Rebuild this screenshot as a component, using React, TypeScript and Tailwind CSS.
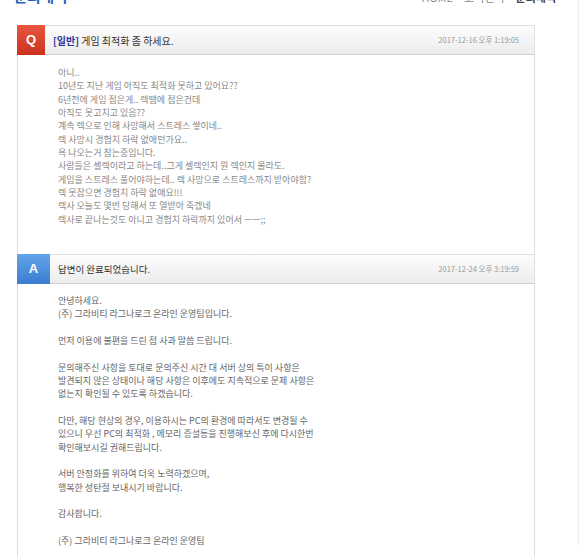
const question = [
  "아니..",
  "10년도 지난 게임 아직도 최적화 못하고 있어요??",
  "6년전에 게임 접은게.. 렉땜에 접은건데",
  "아직도 못고치고 있음??",
  "계속 렉으로 인해 사망해서 스트레스 쌓이네..",
  "렉 사망시 경험치 하락 없애던가요..",
  "욕 나오는거 참는중입니다.",
  "사람들은 셀렉이라고 하는데..그게 셀렉인지 뭔 렉인지 몰라도.",
  "게임을 스트레스 풀어야하는데.. 렉 사망으로 스트레스까지 받아야함?",
  "렉 못잡으면 경험치 하락 없애요!!!",
  "렉사 오늘도 몇번 당해서 또 열받아 죽겠네",
  "렉사로 끝나는것도 아니고 경험치 하락까지 있어서 ㅡㅡ;;",
];

const answer = [
  "안녕하세요.",
  "(주) 그라비티 라그나로크 온라인 운영팀입니다.",
  "",
  "먼저 이용에 불편을 드린 점 사과 말씀 드립니다.",
  "",
  "문의해주신 사항을 토대로 문의주신 시간 대 서버 상의 특이 사항은",
  "발견되지 않은 상태이나 해당 사항은 이후에도 지속적으로 문제 사항은",
  "없는지 확인될 수 있도록 하겠습니다.",
  "",
  "다만, 해당 현상의 경우, 이용하시는 PC의 환경에 따라서도 변경될 수",
  "있으니 우선 PC의 최적화 , 메모리 증설등을 진행해보신 후에 다시한번",
  "확인해보시길 권해드립니다.",
  "",
  "서버 안정화를 위하여 더욱 노력하겠으며,",
  "행복한 성탄절 보내시기 바랍니다.",
  "",
  "감사합니다.",
  "",
  "(주) 그라비티 라그나로크 온라인 운영팀",
];

function Lines({ lines, className }: { lines: string[]; className: string }) {
  return (
    <div className={className}>
      {lines.map((line, i) => (
        <p key={i} className="h-[13.33px] whitespace-pre leading-[13.33px]">
          {line}
        </p>
      ))}
    </div>
  );
}

export default function App() {
  return (
    <div className="h-[557px] w-[580px] overflow-hidden bg-white font-['Noto_Sans_CJK_KR',sans-serif]">
      <div className="h-full w-[579px] border-r border-[#ececec]">
        <div className="-mt-[12px] flex h-[16px] items-end justify-between pl-[14px] pr-[22px]">
          <h2 className="text-[14.5px] font-bold leading-[16px] text-[#2062c4]">문의내역</h2>
          <div className="text-[11px] leading-[13px] text-[#888]">
            HOME &gt; 고객센터 &gt; <span className="font-bold text-[#444]">문의내역</span>
          </div>
        </div>

        <div className="ml-[17px] mt-[21px] w-[518px]">
          {/* question */}
          <div className="flex h-[30px] items-center border border-l-0 border-[#e0e0e0] border-b-[#d0d0d0] bg-linear-to-b from-[#fcfcfc] to-[#ededed]">
            <div className="-my-px flex h-[30px] w-[28px] items-center justify-center bg-linear-to-b from-[#ea553f] to-[#c9321e] font-['Liberation_Sans',sans-serif] text-[13px] font-bold text-white">
              Q
            </div>
            <div className="ml-[8px] text-[10px] text-[#333]">
              <span className="font-bold text-[#26359c]">[일반]</span> 게임 최적화 좀 하세요.
            </div>
            <div className="ml-auto mr-[15px] text-[7.5px] text-[#999]">2017-12-16 오후 1:19:05</div>
          </div>
          <Lines
            lines={question}
            className="border-x border-[#dedede] pb-[28px] pl-[40px] pt-[11px] text-[9px] text-[#888]"
          />

          {/* answer */}
          <div className="flex h-[30px] items-center border border-l-0 border-[#e0e0e0] border-b-[#d0d0d0] bg-linear-to-b from-[#fcfcfc] to-[#ededed]">
            <div className="-my-px flex h-[30px] w-[33px] items-center justify-center bg-linear-to-b from-[#62a5ea] to-[#3a7dd0] font-['Liberation_Sans',sans-serif] text-[13px] font-bold text-white">
              A
            </div>
            <div className="ml-[8px] text-[9.5px] text-[#333]">답변이 완료되었습니다.</div>
            <div className="ml-auto mr-[15px] text-[7.5px] text-[#999]">2017-12-24 오후 3:19:59</div>
          </div>
          <Lines
            lines={answer}
            className="border-x border-[#dedede] pb-[28px] pl-[40px] pt-[10px] text-[9px] text-[#666]"
          />
        </div>
      </div>
    </div>
  );
}
